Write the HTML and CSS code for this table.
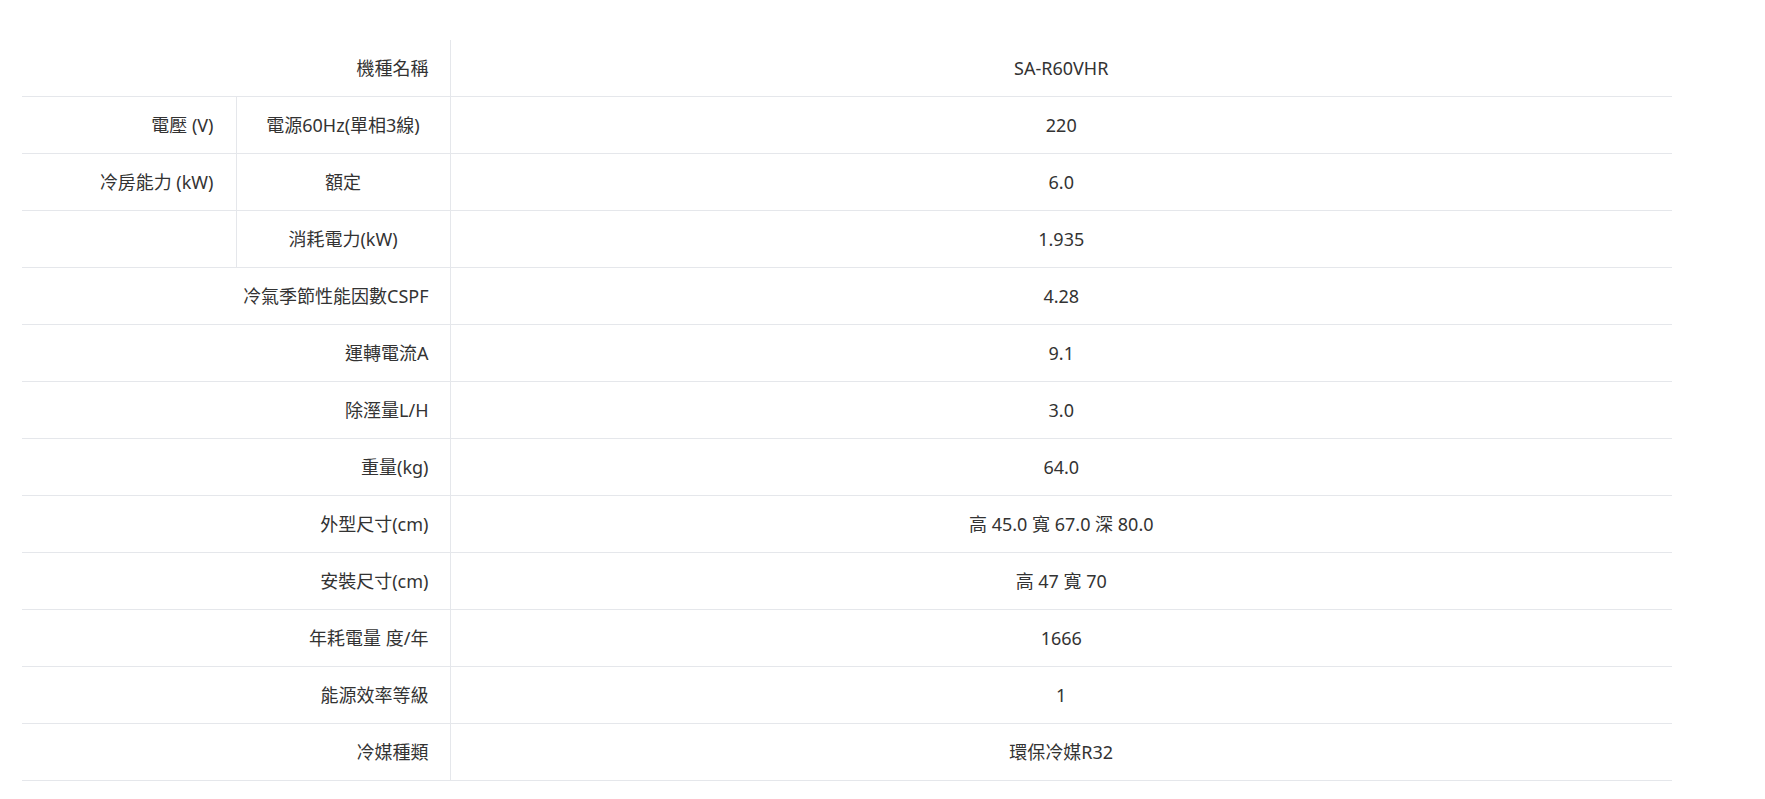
FILE: index.html
```html
<!DOCTYPE html>
<html lang="zh-Hant">
<head>
<meta charset="utf-8">
<title>SA-R60VHR 規格</title>
<link rel="stylesheet" href="styles.css">
</head>
<body>
<div class="spec-wrap">
  <table class="spec">
    <colgroup>
      <col class="c1">
      <col class="c2">
      <col class="c3">
    </colgroup>
    <tbody>
      <tr><th class="label" colspan="2">機種名稱</th><td class="value">SA-R60VHR</td></tr>
      <tr><th class="group">電壓 (V)</th><th class="sub">電源60Hz(單相3線)</th><td class="value">220</td></tr>
      <tr><th class="group">冷房能力 (kW)</th><th class="sub">額定</th><td class="value">6.0</td></tr>
      <tr><th class="group"></th><th class="sub">消耗電力(kW)</th><td class="value">1.935</td></tr>
      <tr><th class="label" colspan="2">冷氣季節性能因數CSPF</th><td class="value">4.28</td></tr>
      <tr><th class="label" colspan="2">運轉電流A</th><td class="value">9.1</td></tr>
      <tr><th class="label" colspan="2">除溼量L/H</th><td class="value">3.0</td></tr>
      <tr><th class="label" colspan="2">重量(kg)</th><td class="value">64.0</td></tr>
      <tr><th class="label" colspan="2">外型尺寸(cm)</th><td class="value">高 45.0 寬 67.0 深 80.0</td></tr>
      <tr><th class="label" colspan="2">安裝尺寸(cm)</th><td class="value">高 47 寬 70</td></tr>
      <tr><th class="label" colspan="2">年耗電量 度/年</th><td class="value">1666</td></tr>
      <tr><th class="label" colspan="2">能源效率等級</th><td class="value">1</td></tr>
      <tr><th class="label" colspan="2">冷媒種類</th><td class="value">環保冷媒R32</td></tr>
    </tbody>
  </table>
</div>
</body>
</html>
```
FILE: styles.css
```css
html, body {
  margin: 0;
  padding: 0;
  background: #ffffff;
}

body {
  font-family: "Noto Sans", "Noto Sans CJK TC", sans-serif;
  color: #333333;
  font-size: 18px;
}

.spec-wrap {
  width: 1650px;
  margin: 40px 0 0 22px;
}

.spec {
  width: 100%;
  border-collapse: collapse;
  table-layout: fixed;
}

.spec .c1 { width: 214px; }
.spec .c2 { width: 214px; }

.spec th,
.spec td {
  height: 56px;
  padding: 0;
  font-weight: 400;
  line-height: 24px;
  vertical-align: middle;
  border-bottom: 1px solid #e5e7eb;
}

.spec .label {
  text-align: right;
  padding-right: 21px;
}

.spec .group {
  text-align: right;
  padding-right: 22px;
}

.spec .sub {
  text-align: center;
  border-left: 1px solid #e5e7eb;
}

.spec .value {
  text-align: center;
  border-left: 1px solid #e5e7eb;
}
```
